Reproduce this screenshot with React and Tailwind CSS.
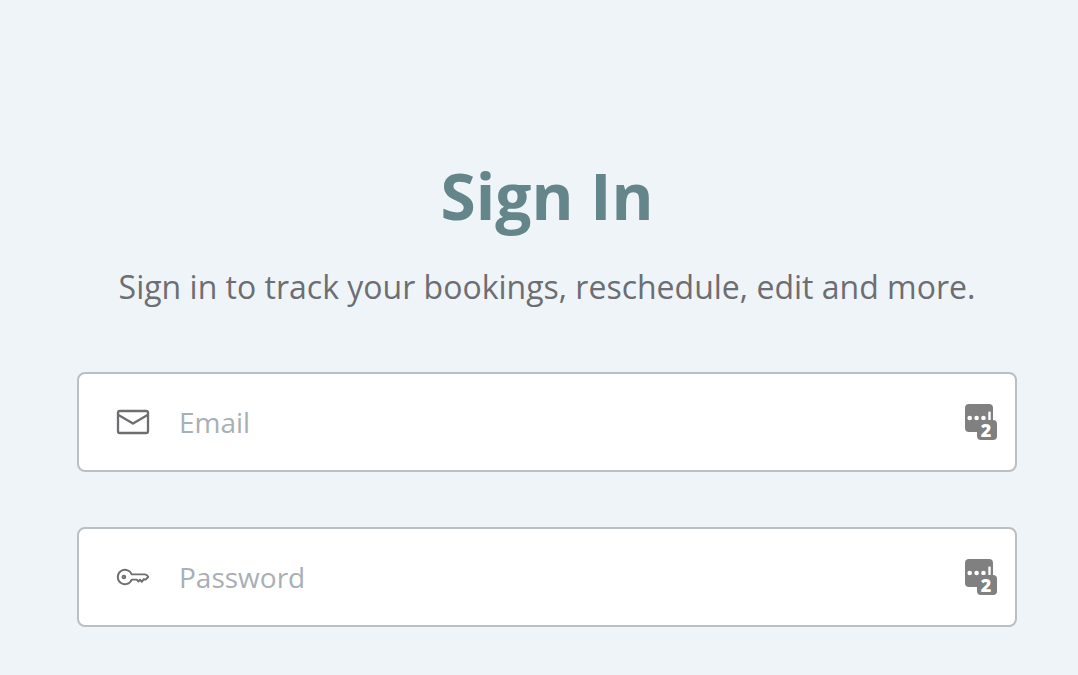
const MailIcon = () => (
  <svg className="h-9 w-9" viewBox="0 0 36 36" fill="none" stroke="currentColor" strokeWidth="2.3" strokeLinejoin="round">
    <rect x="3" y="7" width="30" height="22" rx="1.8" />
    <path d="M3 10.8 18 19.5 33 10.8" />
  </svg>
);

const KeyIcon = () => (
  <svg className="h-9 w-9" viewBox="0 0 36 36" fill="none" stroke="currentColor" strokeWidth="1.9" strokeLinejoin="round">
    <path d="M16.7 15.4H30Q32.8 16.2 33.2 18L30.6 20.6L28.8 20.2L26.8 22.8L25 20.7L23.4 22.6L21.8 20.6H16.7A7.2 7.2 0 1 1 16.7 15.4Z" />
    <circle cx="8.9" cy="18" r="1.4" />
  </svg>
);

// Password manager button at the end of each field
const VaultButton = () => (
  <button type="button" aria-label="Fill from vault" className="relative h-9 w-8 shrink-0">
    <svg className="h-9 w-8" viewBox="0 0 32 36">
      <rect width="28" height="28" rx="4" fill="#808080" />
      <g fill="#fff">
        <circle cx="4.7" cy="14" r="2.3" />
        <circle cx="11.6" cy="14" r="2.3" />
        <circle cx="18.5" cy="14" r="2.3" />
        <rect x="23.3" y="7.5" width="2.4" height="9" rx="1" />
      </g>
      <rect x="12" y="16" width="20" height="20" rx="4" fill="#808080" />
    </svg>
    <span className="absolute right-0 bottom-0 w-5 pr-0.5 text-center text-lg leading-5 font-extrabold text-white">2</span>
  </button>
);

const Field = ({ id, type, label, icon }) => (
  <div className="flex h-[100px] items-center rounded-lg border-2 border-[#b9bfc3] bg-white pr-[18px] pl-9 text-[#6d6e71]">
    <label htmlFor={id} className="shrink-0">
      {icon}
    </label>
    <input
      id={id}
      type={type}
      placeholder={label}
      aria-label={label}
      className="ml-7 min-w-0 flex-1 bg-transparent text-[28px] outline-none placeholder:text-[#a8afb5]"
    />
    <VaultButton />
  </div>
);

const SignIn = () => {
  return (
    <main className="min-h-screen bg-[#eff4f9] pt-[152px] pr-[61px] pl-[77px] font-['Open_Sans',sans-serif]">
      <h1 className="text-center text-[64px] leading-[88px] font-bold text-[#64868a]">Sign In</h1>
      <p className="mt-6 text-center text-[32px] leading-[46px] text-[#6d6e71]">
        Sign in to track your bookings, reschedule, edit and more.
      </p>
      <form className="mt-[62px] flex flex-col gap-[55px]">
        <Field id="email" type="email" label="Email" icon={<MailIcon />} />
        <Field id="password" type="password" label="Password" icon={<KeyIcon />} />
      </form>
    </main>
  );
};

export default SignIn;
